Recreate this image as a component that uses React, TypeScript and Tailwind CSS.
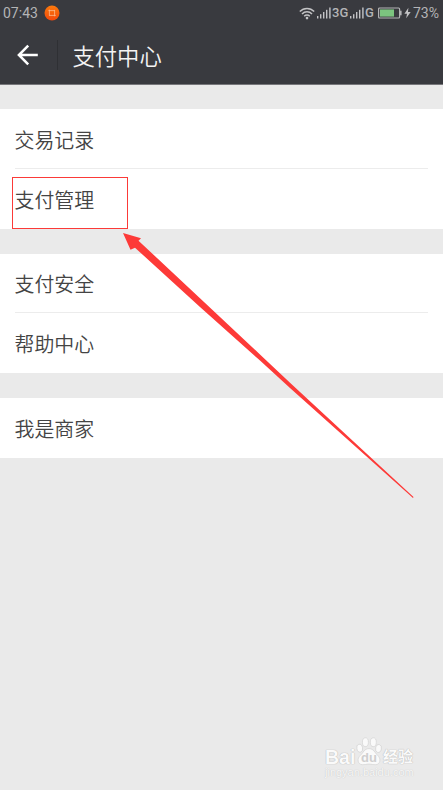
import React from "react";

interface MenuGroupProps {
  items: string[];
}

const groups = [
  ["交易记录", "支付管理"],
  ["支付安全", "帮助中心"],
  ["我是商家"],
];

function SignalIcon() {
  return (
    <svg width="15" height="12" viewBox="0 0 15 12" fill="#c3c3c5" className="shrink-0">
      <rect x="0" y="9" width="1.4" height="2.5" />
      <rect x="3" y="7.2" width="1.4" height="4.3" />
      <rect x="6" y="5" width="1.4" height="6.5" />
      <rect x="9" y="2.8" width="1.4" height="8.7" />
      <rect x="12.2" y="0.5" width="1.4" height="11" />
    </svg>
  );
}

function WifiIcon() {
  return (
    <svg width="16" height="13" viewBox="0 0 16 13" fill="none" stroke="#c3c3c5" strokeWidth="1.5" className="shrink-0">
      <path d="M0.8 4.6C4.8 0.4 11.2 0.4 15.2 4.6" />
      <path d="M3 7C5.8 4.1 10.2 4.1 13 7" />
      <path d="M5.2 9.3C6.8 7.7 9.2 7.7 10.8 9.3" />
      <circle cx="8" cy="11.1" r="1.3" fill="#c3c3c5" stroke="none" />
    </svg>
  );
}

function StatusBar() {
  return (
    <div className="flex h-[26px] items-center pl-[3px] pr-1 font-[Roboto,sans-serif] text-sm leading-none text-[#b4b4b6]">
      <span className="w-[35px]">07:43</span>
      <svg width="16" height="16" viewBox="0 0 16 16" className="ml-1.5 -mt-px">
        <defs>
          <linearGradient id="badge" x1="0" y1="0" x2="0" y2="1">
            <stop offset="0" stopColor="#fb7a0c" />
            <stop offset="1" stopColor="#f2480b" />
          </linearGradient>
        </defs>
        <circle cx="8" cy="8" r="7.5" fill="url(#badge)" />
        <path d="M5.4 4.6v6.2M10.6 4.9v6.4M4.4 5.6h6.4M5.2 10.4h6.6" fill="none" stroke="#fbb98c" strokeWidth="0.8" />
      </svg>
      <div className="ml-auto flex items-center">
        <WifiIcon />
        <span className="ml-[2px] flex"><SignalIcon /></span>
        <span className="-mt-px w-[17px] text-[13px] font-medium">3G</span>
        <span className="ml-px flex"><SignalIcon /></span>
        <span className="-mt-px w-[10px] text-[13px] font-medium">G</span>
        <svg width="24" height="12" viewBox="0 0 24 12" className="ml-[3px] shrink-0">
          <rect x="0.6" y="1" width="21" height="10" rx="1" fill="none" stroke="#b4b4b6" strokeWidth="1.2" />
          <rect x="2" y="2.4" width="14" height="7.2" fill="#7cc47f" />
          <rect x="22" y="3.7" width="1.6" height="4.6" fill="#b4b4b6" />
        </svg>
        <svg width="7" height="12" viewBox="0 0 7 12" className="ml-[2px] shrink-0">
          <path d="M4.4 0.8L0.4 6.7H3L2.2 11.3L6.7 5H4Z" fill="#c3c3c5" />
        </svg>
        <span className="ml-[2px] w-[26px]">73%</span>
      </div>
    </div>
  );
}

function Header() {
  return (
    <header className="h-[85px] border-b border-[#77777b] bg-[#393a3f]">
      <StatusBar />
      <div className="flex h-[58px] items-center">
        <svg width="22" height="22" viewBox="0 0 22 22" fill="none" stroke="#fff" strokeWidth="2.5" className="ml-[17px]">
          <path d="M11.2 1.6L1.9 11L11.2 20.4M2 11H20.8" />
        </svg>
        <div className="ml-[18px] h-[30px] w-px bg-[#2f3034]" />
        <h1 className="ml-[14.5px] text-[22.3px] font-[350] leading-none text-[#f4f4f4]">支付中心</h1>
      </div>
    </header>
  );
}

function MenuGroup({ items }: MenuGroupProps) {
  return (
    <div className="divide-y divide-[#ececec] bg-white px-[15px]">
      {items.map((item) => (
        <div key={item} className="-ml-[0.5px] flex h-[59.7px] items-center pt-[2px] text-[19.9px] font-[350] leading-none text-[#444]">
          {item}
        </div>
      ))}
    </div>
  );
}

function Watermark() {
  return (
    <div className="absolute left-[325px] top-[736px] w-[90px] font-['Liberation_Sans','Noto_Sans_CJK_SC',sans-serif] text-[#fafafa]">
      <div className="flex h-[30px] items-end [text-shadow:0_0_1px_#b4b4b4,0_0_1px_#c0c0c0]">
        <span className="-mb-px w-[31px] text-[19.5px] font-bold leading-[19px]">Bai</span>
        <svg width="27" height="29" viewBox="0 0 27 29" fill="#fafafa" stroke="#d2d2d2" strokeWidth="0.7" className="shrink-0">
          <ellipse cx="3.7" cy="11.2" rx="2.9" ry="4" transform="rotate(-12 3.7 11.2)" />
          <ellipse cx="9.4" cy="5.2" rx="3" ry="4.4" />
          <ellipse cx="17.3" cy="5.2" rx="3" ry="4.4" />
          <ellipse cx="22.5" cy="11.5" rx="2.9" ry="4" transform="rotate(12 22.5 11.5)" />
          <path d="M13 11.6C17.8 11.6 18.7 15.8 21.6 18.3C25.5 21.7 24.2 27.5 19.8 27.7C17 27.8 15.4 27.1 13 27.1C10.6 27.1 9 27.8 6.2 27.7C1.8 27.5 0.5 21.7 4.4 18.3C7.3 15.8 8.2 11.6 13 11.6Z" />
          <text x="13" y="25.3" textAnchor="middle" fontSize="13" fontWeight="700" fill="#cfcfcf" stroke="none" className="[text-shadow:none]">du</text>
        </svg>
        <span className="whitespace-nowrap text-[15px] font-bold leading-[19px]">经验</span>
      </div>
      <div className="text-[11px] leading-3 text-[#f8f8f8] [text-shadow:0_0_1px_#b8b8b8]">jingyan.baidu.com</div>
    </div>
  );
}

export default function App() {
  return (
    <div className="relative h-[790px] w-[443px] overflow-hidden bg-[#eaeaea] font-['Noto_Sans_CJK_SC',sans-serif]">
      <Header />
      <main className="flex flex-col gap-[25px] pt-[24.4px]">
        {groups.map((items) => (
          <MenuGroup key={items[0]} items={items} />
        ))}
      </main>

      {/* Highlight box and pointer */}
      <div className="absolute left-3 top-[177px] h-[52px] w-[116px] border border-[#fb3a38]" />
      <svg width="443" height="790" className="pointer-events-none absolute left-0 top-0">
        <path d="M123 233L141 238.2L138.5 240.7L200 298.2L260 354.5L290 382.8L413.5 497L413 498L290 388L260 360.6L200 307L135 247.7L130.5 249.7Z" fill="#fd3a38" />
      </svg>

      <Watermark />
    </div>
  );
}
